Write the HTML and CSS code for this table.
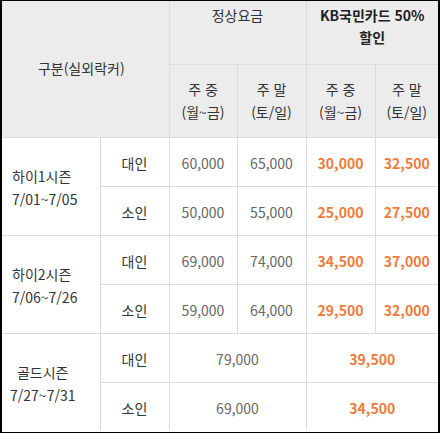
FILE: index.html
```html
<!DOCTYPE html>
<html lang="ko">
<head>
<meta charset="utf-8">
<link rel="stylesheet" href="styles.css">
</head>
<body>
<div class="frame">
<table class="price">
  <colgroup>
    <col class="c1"><col class="c2"><col class="c3"><col class="c4"><col class="c5"><col class="c6">
  </colgroup>
  <thead>
    <tr class="h1">
      <th rowspan="2" colspan="2" class="mid">구분(실외락커)</th>
      <th colspan="2" class="top">정상요금</th>
      <th colspan="2" class="top bold">KB국민카드 50%<br>할인</th>
    </tr>
    <tr class="h2">
      <th>주 중<br>(월~금)</th>
      <th>주 말<br>(토/일)</th>
      <th>주 중<br>(월~금)</th>
      <th>주 말<br>(토/일)</th>
    </tr>
  </thead>
  <tbody>
    <tr class="r">
      <td rowspan="2" class="season">하이1시즌<br>7/01~7/05</td>
      <td class="who">대인</td>
      <td class="num">60,000</td><td class="num">65,000</td>
      <td class="sale">30,000</td><td class="sale">32,500</td>
    </tr>
    <tr class="r">
      <td class="who">소인</td>
      <td class="num">50,000</td><td class="num">55,000</td>
      <td class="sale">25,000</td><td class="sale">27,500</td>
    </tr>
    <tr class="r">
      <td rowspan="2" class="season">하이2시즌<br>7/06~7/26</td>
      <td class="who">대인</td>
      <td class="num">69,000</td><td class="num">74,000</td>
      <td class="sale">34,500</td><td class="sale">37,000</td>
    </tr>
    <tr class="r">
      <td class="who">소인</td>
      <td class="num">59,000</td><td class="num">64,000</td>
      <td class="sale">29,500</td><td class="sale">32,000</td>
    </tr>
    <tr class="r">
      <td rowspan="2" class="season center">골드시즌<br>7/27~7/31</td>
      <td class="who">대인</td>
      <td colspan="2" class="num">79,000</td>
      <td colspan="2" class="sale">39,500</td>
    </tr>
    <tr class="r last">
      <td class="who">소인</td>
      <td colspan="2" class="num">69,000</td>
      <td colspan="2" class="sale">34,500</td>
    </tr>
  </tbody>
</table>
</div>
</body>
</html>
```

FILE: styles.css
```css
html, body {
  margin: 0;
  padding: 0;
  background: #fff;
}
.frame {
  width: 436px;
  height: 431px;
  border-left: 2px solid #000;
  border-right: 2px solid #000;
  border-top: 1px solid #000;
  border-bottom: 1px solid #000;
  overflow: hidden;
}
.price {
  width: 436px;
  border-collapse: collapse;
  border: hidden;
  table-layout: fixed;
  font-family: "Noto Sans CJK KR", "Noto Sans", sans-serif;
  font-size: 14px;
  line-height: 23px;
  color: #333;
}
.c1 { width: 98px; }
.c2 { width: 69px; }
.c3 { width: 68px; }
.c4 { width: 69px; }
.c5 { width: 69px; }
.c6 { width: 63px; }
.price th, .price td {
  border: 1px solid #dcdcdc;
  text-align: center;
  vertical-align: middle;
  padding: 0;
}
.price td {
  padding-top: 4px;
}
.price th {
  background: #ececec;
  font-weight: normal;
  color: #333;
}
.price th.mid {
  padding-left: 0;
  padding-right: 8px;
}
.price th.top {
  vertical-align: top;
  padding-top: 3px;
  line-height: 22px;
}
.price th.bold {
  font-weight: bold;
  color: #222;
}
.h1 { height: 63px; }
.h2 { height: 73px; }
.r { height: 49px; }
.last { height: 48px; }
.price td.season {
  text-align: left;
  padding-left: 10px;
  color: #333;
}
.price td.season.center {
  text-align: center;
  padding-left: 0;
  padding-right: 16px;
}
.who { color: #333; }
.num { color: #666; }
.sale {
  color: #f07a3a;
  font-weight: bold;
}
```
